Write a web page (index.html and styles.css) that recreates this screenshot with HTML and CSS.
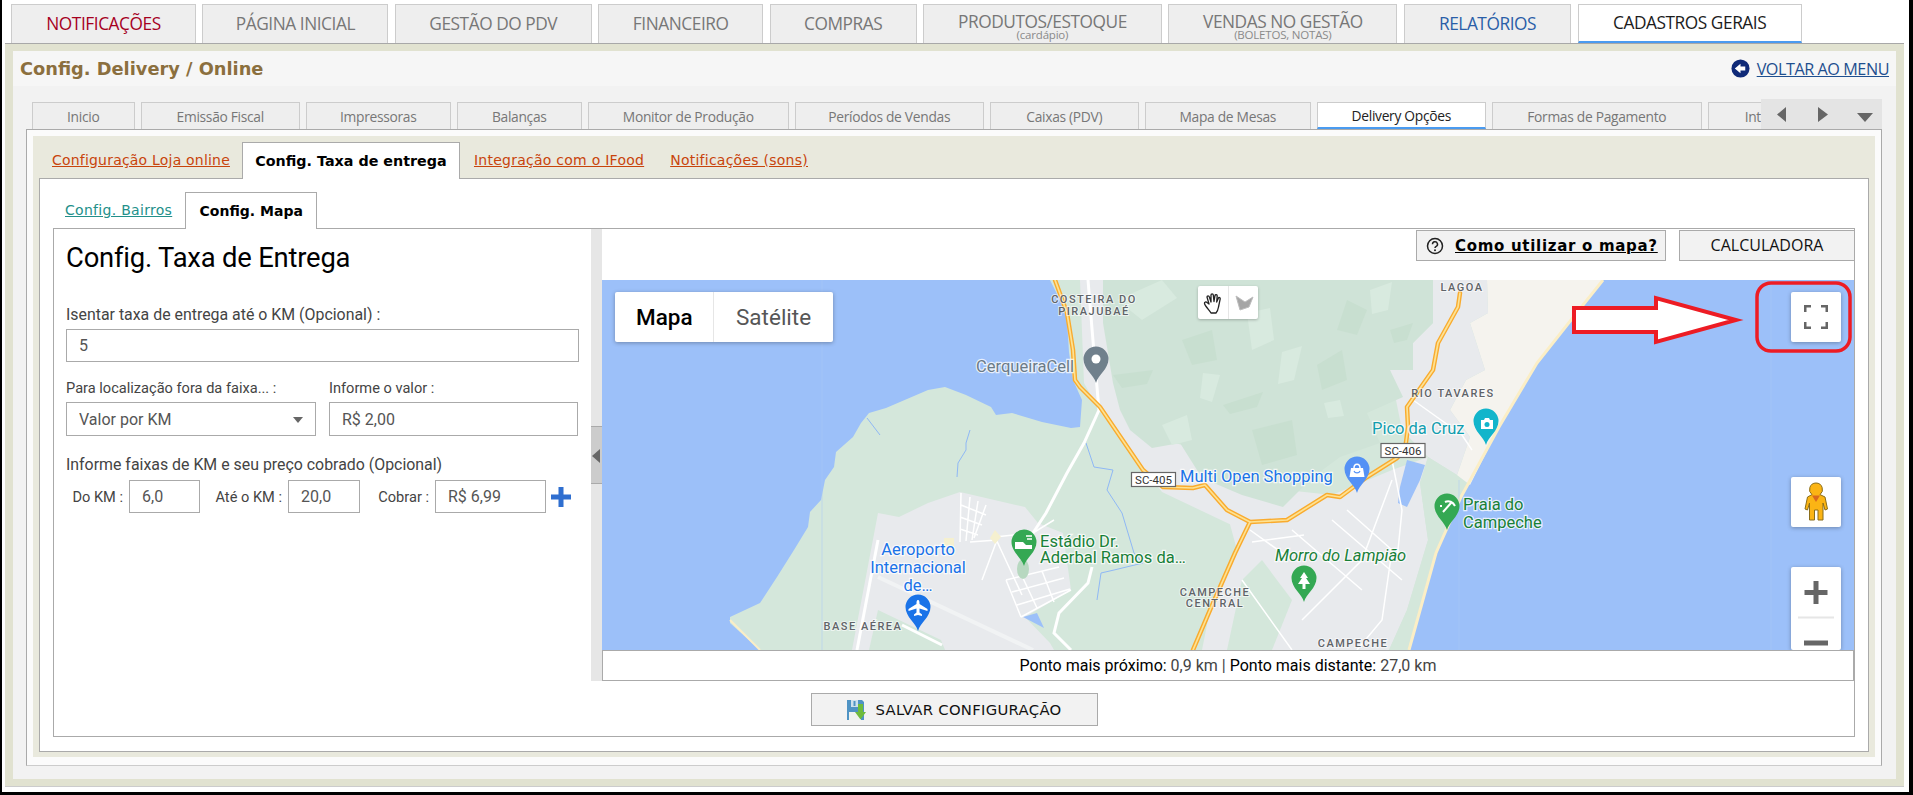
FILE: index.html
```html
<!DOCTYPE html>
<html lang="pt-BR">
<head>
<meta charset="utf-8">
<title>Config. Delivery / Online</title>
<link rel="stylesheet" href="styles.css">
</head>
<body>
<div class="page">
  <nav class="topnav">
    <a class="toptab notif">NOTIFICAÇÕES</a>
    <a class="toptab">PÁGINA INICIAL</a>
    <a class="toptab">GESTÃO DO PDV</a>
    <a class="toptab">FINANCEIRO</a>
    <a class="toptab">COMPRAS</a>
    <a class="toptab two">PRODUTOS/ESTOQUE<small>(cardápio)</small></a>
    <a class="toptab two">VENDAS NO GESTÃO<small>(BOLETOS, NOTAS)</small></a>
    <a class="toptab rel">RELATÓRIOS</a>
    <a class="toptab on">CADASTROS GERAIS</a>
  </nav>
  <main class="outer">
    <div class="inner">
      <header class="titlebar">
        <h1 class="title">Config. Delivery / Online</h1>
        <a class="back">
          <svg class="back-ico" viewBox="0 0 20 20"><circle cx="10" cy="10" r="9.5" fill="#0f2a78"/><path d="M4 10 10 5v3h5v4h-5v3z" fill="#fff"/></svg>
          <span>VOLTAR AO MENU</span>
        </a>
      </header>
      <div class="l2wrap">
        <nav class="l2tabs">
          <a class="l2tab">Inicio</a>
          <a class="l2tab">Emissão Fiscal</a>
          <a class="l2tab">Impressoras</a>
          <a class="l2tab">Balanças</a>
          <a class="l2tab">Monitor de Produção</a>
          <a class="l2tab">Períodos de Vendas</a>
          <a class="l2tab">Caixas (PDV)</a>
          <a class="l2tab">Mapa de Mesas</a>
          <a class="l2tab on">Delivery Opções</a>
          <a class="l2tab">Formas de Pagamento</a>
          <a class="l2tab">Integrações</a>
        </nav>
        <div class="scroller">
          <svg viewBox="0 0 121 30" width="121" height="30"><path d="M25 8v15L16 15.500zM57 8l10 7.500-10 7.500zM96 14h16l-8 9z" fill="#666"/></svg>
        </div>
      </div>
      <section class="box2">
        <div class="olive">
          <nav class="l3tabs">
            <a class="l3tab first">Configuração Loja online</a>
            <a class="l3tab on">Config. Taxa de entrega</a>
            <a class="l3tab">Integração com o IFood</a>
            <a class="l3tab">Notificações (sons)</a>
          </nav>
          <section class="box3">
            <nav class="l4tabs">
              <a class="l4tab">Config. Bairros</a>
              <a class="l4tab on">Config. Mapa</a>
            </nav>
            <section class="box4">
              <div class="split">
                <form class="form">
                  <h2 class="form-title">Config. Taxa de Entrega</h2>
                  <label class="lbl first">Isentar taxa de entrega até o KM (Opcional) :</label>
                  <input class="fld h33" value="5" readonly>
                  <div class="two-col">
                    <div>
                      <label class="lbl small">Para localização fora da faixa... :</label>
                      <div class="select-wrap"><select class="fld h34"><option>Valor por KM</option></select></div>
                    </div>
                    <div>
                      <label class="lbl small">Informe o valor :</label>
                      <input class="fld h34" value="R$ 2,00" readonly>
                    </div>
                  </div>
                  <label class="lbl third">Informe faixas de KM e seu preço cobrado (Opcional)</label>
                  <div class="range">
                    <span class="rl">Do KM :</span><input class="fld h33" value="6,0" readonly>
                    <span class="rl">Até o KM :</span><input class="fld h33" value="20,0" readonly>
                    <span class="rl">Cobrar :</span><input class="fld h33" value="R$ 6,99" readonly>
                    <svg class="plus" viewBox="0 0 22 22"><path d="M8.500 1h5v7.500H21v5h-7.500V21h-5v-7.500H1v-5h7.500z" fill="#2f6fd0"/></svg>
                  </div>
                </form>
                <div class="splitter"><span class="grip"></span></div>
                <div class="mapcol">
                  <div class="maptools">
                    <a class="help">
                      <svg class="help-ico" viewBox="0 0 18 18"><circle cx="9" cy="9" r="7.500" fill="none" stroke="#222" stroke-width="1.500"/><path d="M6.500 7.200A2.500 2.400 0 1 1 10.200 9.300C9.300 9.800 9 10.200 9 11" fill="none" stroke="#222" stroke-width="1.500"/><circle cx="9" cy="13.200" r="1" fill="#222"/></svg>
                      <span>Como utilizar o mapa?</span>
                    </a>
                    <a class="calc">CALCULADORA</a>
                  </div>
                  <div class="map">
                    <svg class="mapsvg" viewBox="0 0 1252 370" width="1252" height="370">
                      <defs>
                        <path id="pin" d="M0 36C-2 28-12.500 22-12.500 12A12.500 12.500 0 1 1 12.500 12C12.500 22 2 28 0 36Z"/>
                      </defs>
                      <rect width="1252" height="370" fill="#9cc0f9"/>
                      <path d="M448 0 458 20 465 40 467 72 471 100 480 120 478 147 469 148 440 142 410 133 394 135 389 127 364 115 343 107 326 110 284 128 267 133 259 143 251 157 234 172 232 187 223 200 219 220 208 232 206 247 192 270 175 297 158 323 128 337 128 343 158 370H807L834 273 859 217 897 147 935 83 969 40 1001 0Z" fill="#d4e7db"/>
                      <path d="M885 0H1001L969 40 935 83 897 147 868 205 855 195 868 157 848 130 864 100 883 90 868 43 886 33Z" fill="#f5f3ee"/>
                      <path d="M831 0H885L886 33 868 43 883 90 864 100 848 130 868 157 855 195 826 177 800 150 788 90 811 90 811 63 831 43Z" fill="#e8eaed"/>
                      <path d="M620 215 684 210 730 215 790 190 826 177 818 203 826 260 805 330 787 370H600L610 320 635 270Z" fill="#e8eaed"/>
                      <path d="M640 300 660 280 690 320 670 370H625Z" fill="#d4e7db"/>
                      <path d="M826 177 855 195 840 260 818 320 807 370H787L805 330 826 260 818 203Z" fill="#d4e7db"/>
                      <path d="M478 0H520L530 150 580 165 690 235 640 250 560 212 516 155 497 130 482 103Z" fill="#e8eaed"/>
                      <path d="M358 212 423 227 436 243 461 253 469 310 423 337 448 363 452 370H250L276 233 297 237 326 223Z" fill="#e8eaed"/>
                      <path d="M276 330 339 360 343 370H267Z" fill="#d4e7db"/>
                      <path d="M501 0H831V43L811 63 811 90 788 90 801 117 765 133 778 163 738 177 711 197 681 227 640 215 600 198 578 163 550 168 528 150 518 130 511 103 501 43Z" fill="#cfe3d7"/>
                      <g fill="#d8eadf">
                        <path d="M645 33 668 28 672 60 650 70Z"/>
                        <path d="M601 93 618 95 610 122 598 118Z"/>
                        <path d="M515 20 560 0 575 18 540 40Z"/>
                        <path d="M722 123 738 120 742 136 726 138Z"/>
                        <path d="M680 72 700 66 692 100 676 104Z"/>
                        <path d="M768 10 790 2 786 30 770 34Z"/>
                        <path d="M560 145 585 135 590 160 570 165Z"/>
                      </g>
                      <g fill="#c8dfd0">
                        <path d="M621 125 661 112 655 127 628 134Z"/>
                        <path d="M511 95 551 90 545 104 520 108Z"/>
                        <path d="M788 50 811 43 805 60 792 63Z"/>
                        <path d="M715 85 740 70 745 100 720 110Z"/>
                        <path d="M580 60 610 50 615 80 590 85Z"/>
                        <path d="M650 150 690 140 695 175 660 185Z"/>
                        <path d="M745 20 765 30 755 55 735 50Z"/>
                      </g>
                      <path d="M1001 0 969 40 935 83 897 147 859 217 834 273 807 370" fill="none" stroke="#fbeec6" stroke-width="3"/>
                      <path d="M128 340 158 370" fill="none" stroke="#fbeec6" stroke-width="2"/>
                      <g fill="none" stroke="#8fb8f5" stroke-width="1">
                        <path d="M265 138 278 155"/>
                        <path d="M368 150 364 163 364 170 356 183 355 197"/>
                        <path d="M484 163 492 187 511 190 505 210 520 233 532 273 541 283 512 290 499 293 495 320"/>
                      </g>
                      <path d="M421 337 435 333 442 348Z" fill="#9cc0f9"/>
                      <path d="M805 180 823 185 818 200 805 227 796 223 798 207Z" fill="#9cc0f9"/>
                      <g fill="none" stroke="#fff" stroke-width="1.500">
                        <path d="M359 213 358 262M368 217 364 261M376 221 370 260M384 225 372 258M359 225 384 235M358 237 380 245M358 249 376 255"/>
                        <path d="M404 300 457 287M410 312 462 298M415 325 468 309M419 337 469 310M420 296 435 328M440 291 452 322M404 300 419 337"/>
                        <path d="M276 260 255 370" stroke-width="3"/>
                        <path d="M393 257 431 253 452 240"/>
                        <path d="M393 257 420 315M368 262 395 260M380 300 395 260"/>
                        <path d="M648 250 690 280M690 250 760 310M730 240 800 300M790 200 760 280 700 340M745 230 790 270 780 340 755 370M702 255 650 262M640 300 690 370"/>
                        <path d="M811 120 860 155 870 170M790 180 800 230 795 280"/>
                      </g>
                      <path d="M276 297 431 370" fill="none" stroke="#f1f3f4" stroke-width="4"/>
                      <g fill="none" stroke="#fff" stroke-width="3">
                        <path d="M486 0 492 73 497 130 482 163 465 193 444 233 431 253"/>
                        <path d="M490 287 486 303 457 333 452 353 469 370"/>
                        <path d="M300 345 340 365"/>
                      </g>
                      <ellipse cx="421" cy="289" rx="6" ry="10" fill="#b7d8c0"/>
                      <rect x="342" y="258" width="10" height="8" fill="#f5f0cf"/>
                      <path d="M388 258 393 250 399 257 393 264Z" fill="#f5f0cf"/>
                      <g fill="none" stroke-linecap="round" stroke-linejoin="round">
                        <g stroke="#f9ab2e" stroke-width="4.500">
                          <path d="M453 0 465 33 471 70 473 100 478 107 498 127 541 190 561 207 591 208 603 205 625 230 648 242 685 240 725 215 738 217 765 197 795 178 803 170 806 147 805 127 831 90 836 63 856 27 858 13"/>
                          <path d="M648 242 633 273 608 330 591 370"/>
                        </g>
                        <g stroke="#fde293" stroke-width="1.700">
                          <path d="M453 0 465 33 471 70 473 100 478 107 498 127 541 190 561 207 591 208 603 205 625 230 648 242 685 240 725 215 738 217 765 197 795 178 803 170 806 147 805 127 831 90 836 63 856 27 858 13"/>
                          <path d="M648 242 633 273 608 330 591 370"/>
                        </g>
                      </g>
                      <path d="M220 0V370M1169 0V370M857 200V370" stroke="#a9c9fa" stroke-width="1" fill="none" opacity=".5"/>
                      <g class="shield">
                        <rect x="529.500" y="192.500" width="44" height="14"/>
                        <rect x="779" y="163.500" width="44" height="14"/>
                      </g>
                      <g class="shield-t">
                        <text x="551.500" y="204">SC-405</text>
                        <text x="801" y="175">SC-406</text>
                      </g>
                      <g class="area">
                        <text x="492" y="23">COSTEIRA DO</text>
                        <text x="492" y="35">PIRAJUBAÉ</text>
                        <text x="860" y="11">LAGOA</text>
                        <text x="851" y="117">RIO TAVARES</text>
                        <text x="613" y="316">CAMPECHE</text>
                        <text x="613" y="327">CENTRAL</text>
                        <text x="751" y="367">CAMPECHE</text>
                        <text x="261" y="350">BASE AÉREA</text>
                      </g>
                      <g class="poi">
                        <text class="gray" x="374" y="92">CerqueiraCell</text>
                        <text class="blue" x="578" y="202">Multi Open Shopping</text>
                        <text class="teal" x="770" y="154">Pico da Cruz</text>
                        <text class="green" x="861" y="230">Praia do</text>
                        <text class="green" x="861" y="248">Campeche</text>
                        <text class="green ital" x="673" y="281">Morro do Lampião</text>
                        <text class="green" x="438" y="267">Estádio Dr.</text>
                        <text class="green" x="438" y="283">Aderbal Ramos da…</text>
                        <text class="blue mid" x="316" y="275">Aeroporto</text>
                        <text class="blue mid" x="316" y="293">Internacional</text>
                        <text class="blue mid" x="316" y="311">de…</text>
                      </g>
                      <use href="#pin" x="494" y="67" fill="#70808c"/>
                      <circle cx="494" cy="79" r="4.500" fill="#fff"/>
                      <use href="#pin" x="755" y="177" fill="#5491f5"/>
                      <path d="M749 188h12l1.500 9h-15z" fill="#fff"/>
                      <path d="M752 188c0-5 6-5 6 0" fill="none" stroke="#fff" stroke-width="1.500"/>
                      <path d="M752 191c1 2.500 5 2.500 6 0" fill="none" stroke="#5491f5" stroke-width="1.200"/>
                      <use href="#pin" x="884" y="129" fill="#12b5cb"/>
                      <path d="M879 140h3l1-2h4l1 2h3v9h-12z" fill="#fff"/>
                      <circle cx="885" cy="144.500" r="2.500" fill="#12b5cb"/>
                      <use href="#pin" x="845" y="214" fill="#34a853"/>
                      <path d="M841 232 849 223M843 222C847 220 851 222 853 226M838 226h2" stroke="#fff" stroke-width="2" fill="none"/>
                      <use href="#pin" x="702" y="286" fill="#34a853"/>
                      <path d="M702 292 706 298H704L708 304H703.500V309H700.500V304H696L700 298H698Z" fill="#fff"/>
                      <use href="#pin" x="422" y="250" fill="#34a853"/>
                      <path d="M413 262h8l3 3h6v4h-17z" fill="#fff"/>
                      <path d="M424 256h6M425 259h5" stroke="#fff" stroke-width="1.500"/>
                      <use href="#pin" x="316" y="315" fill="#1a73e8"/>
                      <path d="M316 320c1.500 0 1.500 2 1.500 4l8 5v2l-8-2.500v4l2.500 2v1.500l-4-1-4 1V334.500l2.500-2v-4l-8 2.500v-2l8-5c0-2 0-4 1.500-4z" fill="#fff"/>
                      <path class="red-arrow" d="M972 28H1054V18L1134 40 1054 62V52H972Z"/>
                      <rect class="red-box" x="1155" y="3" width="93" height="68" rx="14"/>
                    </svg>
                    <div class="maptype">
                      <span class="mt on">Mapa</span><span class="mt">Satélite</span>
                    </div>
                    <div class="drawtools">
                      <span class="dt">
                        <svg viewBox="0 0 20 24" width="20" height="24"><path d="M6 13 4 6c0-1.500 2-1.500 2.400 0L8 11 8 4c0-1.500 2.200-1.500 2.300 0L11 10.500 12 4.500c.3-1.400 2.200-1.200 2.200.3L13.700 11l1.600-3.800c.5-1.300 2.200-.7 1.900.7L15.500 16C15 19 14 21 13 22H8C7 20 2 15 1.500 12.500 1.200 11 3 10.500 4 11.500z" fill="#fff" stroke="#222" stroke-width="1.300" stroke-linejoin="round"/></svg>
                      </span>
                      <span class="dt">
                        <svg viewBox="0 0 20 24" width="20" height="24"><path d="M2 5 11 11 19 6 15 16 6 19Z" fill="#a5a5a5" stroke="#bdbdbd"/></svg>
                      </span>
                    </div>
                    <div class="mapbtn full">
                      <svg viewBox="0 0 24 24" width="24" height="24"><path d="M1 7V1h6M17 1h6v6M1 17v6h6M23 17v6h-6" fill="none" stroke="#666" stroke-width="3"/></svg>
                    </div>
                    <div class="mapbtn peg">
                      <svg viewBox="0 0 24 40" width="24" height="40"><path d="M12 1a6.500 6.500 0 0 1 4 11.600L21 15l2.500 12-2.500 1-2-7V38h-5V28h-3.500V38H5.500V21l-2 7-2.500-1L3.500 15l4.500-2.400A6.500 6.500 0 0 1 12 1z" fill="#fbb414" stroke="#8a6d1a" stroke-width="1"/><path d="M8 13.500h8L12 20z" fill="#d9681d"/></svg>
                    </div>
                    <div class="mapbtn zoombox">
                      <svg viewBox="0 0 50 83" width="50" height="83"><path d="M22.500 14h5v9h9v5h-9v9h-5v-9h-9v-5h9z" fill="#666"/><path d="M7 50.500h36" stroke="#e6e6e6" stroke-width="2"/><path d="M13 76h24" stroke="#666" stroke-width="5"/></svg>
                    </div>
                  </div>
                  <div class="mapfoot">
                    <b>Ponto mais próximo:</b> 0,9 km | <b>Ponto mais distante:</b> 27,0 km
                  </div>
                </div>
              </div>
              <div class="saverow">
                <a class="save">
                  <svg class="save-ico" viewBox="0 0 20 20"><path d="M1 0h15l2 2v18H1z" fill="#4f93c4"/><rect x="5" y="0" width="7" height="7" fill="#cfe0ec"/><rect x="7.500" y="1" width="2" height="5" fill="#4f93c4"/><rect x="3" y="12" width="12" height="8" fill="#eef2ee"/><path d="M12 4h5v8h3l-5.500 7.500L9 12h3z" fill="#6ebb3c"/></svg>
                  <span>SALVAR CONFIGURAÇÃO</span>
                </a>
              </div>
            </section>
          </section>
        </div>
      </section>
    </div>
  </main>
</div>
</body>
</html>
```

FILE: styles.css
```css
* { box-sizing: border-box; }
html, body { margin: 0; padding: 0; background: #fff; }
body { height: 795px; overflow: hidden; }
a { display: block; }
h1, h2 { margin: 0; }

.page {
  height: 795px;
  background: #fff;
  border-left: 2px solid #000;
  border-right: 4px solid #000;
  border-bottom: 3px solid #000;
  padding: 4px 5px 5px 3px;
  display: flex;
  flex-direction: column;
}

/* top navigation */
.topnav {
  display: grid;
  grid-template-columns: 185px 186px 197px 165px 147px 239px 229px 167.5px 224px;
  column-gap: 6.4px;
  padding-left: 6px;
  height: 39px;
  flex: none;
}
.toptab {
  display: flex;
  flex-direction: column;
  align-items: center;
  justify-content: center;
  background: #eee;
  border: 1px solid #ccc;
  border-bottom: 0;
  font: 17.3px/18px "Open Sans", sans-serif;
  letter-spacing: -.45px;
  color: #777;
}
.toptab small { display: block; font-size: 11.5px; line-height: 10px; color: #8a8a8a; letter-spacing: -.2px; }
.toptab.two { padding-top: 5px; line-height: 16px; }
.toptab.notif { color: #a6001f; }
.toptab.rel { color: #2a5ea8; }
.toptab.on { background: #fff; color: #1c1c1c; border-bottom: 2px solid #4a9bf0; }

.outer {
  flex: 1;
  min-height: 0;
  background: #e1e2d0;
  border-top: 1px solid #a8a8a8;
  border-bottom: 1px solid #ccc;
  padding: 7px 8px;
  display: flex;
}
.inner {
  flex: 1;
  background: #f2f2f2;
  padding-bottom: 13px;
  display: flex;
  flex-direction: column;
  min-width: 0;
}
.titlebar {
  height: 35px;
  flex: none;
  background: #f6f6f6;
  display: flex;
  align-items: center;
  justify-content: space-between;
  padding: 0 7px;
}
.title { font: bold 17.8px "DejaVu Sans", sans-serif; color: #8b6f3e; }
.back { display: flex; align-items: center; gap: 7px; font: 16.2px "Open Sans", sans-serif; letter-spacing: -.45px; color: #1e4f8f; text-decoration: underline; }
.back-ico { width: 19px; height: 19px; }

/* second level tabs */
.l2wrap { position: relative; margin: 13px 0 0 13px; height: 30px; width: 1856px; overflow: hidden; flex: none; }
.l2tabs { display: grid; grid-template-columns: 102.5px 158.5px 144.5px 124.5px 200.5px 188.5px 148.5px 165.5px 168.5px 209.5px 145px; column-gap: 6.5px; padding-left: 6px; margin-top: 3px; height: 27px; width: 1900px; }
.l2tab {
  display: flex; align-items: center; justify-content: center;
  background: #eee;
  border: 1px solid #ccc;
  border-bottom: 0;
  font: 13.8px "Open Sans", sans-serif;
  letter-spacing: -.3px;
  color: #777;
  white-space: nowrap;
}
.l2tab.on { background: #fff; color: #222; border-bottom: 2px solid #4a9bf0; }
.scroller { position: absolute; right: 0; top: 0; width: 121px; height: 30px; background: #e4e4e4; overflow: hidden; }
.scroller svg { display: block; }
.box2 {
  margin: 0 0 0 13px;
  width: 1856px;
  flex: 1;
  min-height: 0;
  border: 1px solid #aaa;
  border-bottom-color: #ccc;
  background: #fbfbfb;
  padding: 6px 6px 8px;
  display: flex;
}
.olive { flex: 1; min-width: 0; background: #e9e9dd; padding: 6px 6px 5px; display: flex; flex-direction: column; }

/* third level tabs */
.l3tabs { display: flex; height: 37px; padding-left: 13px; flex: none; position: relative; z-index: 1; margin-bottom: -1px; }
.l3tab {
  font: 14px/37px "DejaVu Sans", sans-serif;
  letter-spacing: .25px;
  color: #c8440c;
  text-decoration: underline;
  margin-right: 26px;
  white-space: nowrap;
}
.l3tab.first { margin-right: 12px; letter-spacing: .2px; }
.l3tab.on {
  background: #fff; color: #000; font-weight: bold; text-decoration: none;
  border: 1px solid #aaa; border-bottom: 0;
  width: 218px; text-align: center; letter-spacing: 0;
  font-size: 14.3px;
  margin-right: 14px;
}
.box3 { flex: 1; min-height: 0; background: #fff; border: 1px solid #aaa; padding: 13px 13px 14px; display: flex; flex-direction: column; }
.l4tabs { display: flex; height: 37px; padding-left: 12px; flex: none; position: relative; z-index: 1; margin-bottom: -1px; }
.l4tab { font: 14px/37px "DejaVu Sans", sans-serif; color: #23908a; text-decoration: underline; margin-right: 13px; white-space: nowrap; letter-spacing: .3px; }
.l4tab.on { background: #fff; color: #000; font-weight: bold; text-decoration: none; border: 1px solid #aaa; border-bottom: 0; width: 132px; text-align: center; letter-spacing: 0; }
.box4 { flex: 1; min-height: 0; border: 1px solid #aaa; background: #fff; display: flex; flex-direction: column; }
.split { display: grid; grid-template-columns: 537px 11px 1fr; height: 452px; flex: none; }

/* form */
.form { padding: 11px 12px 0; font: 14.6px/18px Roboto, sans-serif; color: #444; }
.form-title { font: 400 27.4px/36px Roboto, sans-serif; color: #000; letter-spacing: -.2px; }
.lbl { display: block; line-height: 18px; font-size: 15.9px; }
.lbl.small { font-size: 14.6px; }
.lbl.first { margin-top: 30px; }
.fld {
  display: block; width: 100%;
  border: 1px solid #aaa; background: #fff;
  font: 16px Roboto, sans-serif; color: #555;
  padding: 0 12px; margin-top: 5px; border-radius: 0; outline: 0; appearance: none;
}
.h33 { height: 33px; }
.h34 { height: 34px; }
.two-col { display: grid; grid-template-columns: 250px 249px; column-gap: 13px; margin-top: 17px; }
.select-wrap { position: relative; }
.select-wrap::after { content: ""; position: absolute; right: 13px; top: 15px; border: 5px solid transparent; border-top: 6px solid #666; border-bottom: 0; }
.lbl.third { margin-top: 20px; }
.range { display: grid; grid-template-columns: 63px 71px 88px 72px 75px 111px 26px; margin-top: 6px; align-items: center; }
.range .fld { margin-top: 0; }
.rl { text-align: right; padding-right: 6px; white-space: nowrap; }
.plus { width: 22px; height: 22px; margin-left: 4px; }

.splitter { background: #e6e6e6; position: relative; }
.grip { position: absolute; left: 0; right: 0; top: 197px; height: 58px; background: #ccc; border-top: 1px solid #aaa; border-bottom: 1px solid #aaa; }
.grip::after { content: ""; position: absolute; left: 1px; top: 22px; border: 7px solid transparent; border-right: 8px solid #666; border-left: 0; }

.mapcol { display: flex; flex-direction: column; min-width: 0; }
.maptools { height: 51px; flex: none; display: flex; justify-content: flex-end; align-items: flex-start; gap: 13px; padding-top: 1px; }
.help { display: flex; align-items: center; gap: 11px; width: 250px; height: 31px; padding-left: 9px; background: #f2f2f2; border: 1px solid #aaa; font: bold 15px "DejaVu Sans", sans-serif; color: #000; text-decoration: underline; letter-spacing: .7px; white-space: nowrap; }
.help-ico { width: 18px; height: 18px; flex: none; }
.calc { width: 175px; height: 31px; background: #f2f2f2; border: 1px solid #aaa; border-right: 0; font: 16px/29px "Open Sans", sans-serif; text-align: center; color: #111; }

/* map */
.map { position: relative; height: 370px; flex: none; overflow: hidden; background: #9cc0f9; }
.mapsvg { display: block; }
.maptype { position: absolute; left: 13px; top: 12px; width: 218px; height: 50px; display: flex; background: #fff; border-radius: 2px; box-shadow: 0 1px 4px rgba(0,0,0,.3); font: 22.5px/50px Roboto, sans-serif; }
.mt { padding-left: 22px; color: #565656; }
.mt.on { color: #000; font-weight: 500; border-right: 1px solid #e6e6e6; width: 99px; padding-left: 21px; }
.drawtools { position: absolute; left: 596px; top: 6px; height: 33px; display: flex; background: #fff; border-radius: 2px; box-shadow: 0 1px 3px rgba(0,0,0,.25); }
.dt { width: 30px; display: flex; align-items: center; justify-content: center; }
.dt + .dt { border-left: 1px solid #e6e6e6; }
.mapbtn { position: absolute; left: 1189px; width: 50px; display: flex; align-items: center; justify-content: center; background: #fff; border-radius: 2px; box-shadow: 0 1px 4px rgba(0,0,0,.3); }
.full { top: 12px; height: 50px; }
.peg { top: 197px; height: 50px; }
.zoombox { top: 287px; height: 83px; }
.red-arrow { fill: #fff; stroke: #ed1c24; stroke-width: 4; }
.red-box { fill: none; stroke: #ed1c24; stroke-width: 3.500; }
.shield rect { fill: #fff; stroke: #666; stroke-width: 1.200; }
.shield-t text { font: 11.500px Roboto, sans-serif; fill: #333; text-anchor: middle; }
.area text { font: 500 11px Roboto, sans-serif; letter-spacing: 1.5px; fill: #5f6368; text-anchor: middle; paint-order: stroke; stroke: #fff; stroke-width: 2px; stroke-opacity: .6; }
.poi text { font: 16.500px Roboto, sans-serif; paint-order: stroke; stroke: #fff; stroke-width: 2.500px; stroke-opacity: .75; }
.poi .gray { fill: #6b7b88; }
.poi .blue { fill: #1a73e8; }
.poi .teal { fill: #129eaf; }
.poi .green { fill: #188038; }
.poi .ital { font-style: italic; }
.poi .mid { text-anchor: middle; }
.mapfoot { height: 31px; flex: none; background: #fff; border: 1px solid #aaa; text-align: center; font: 16px/29px Roboto, sans-serif; color: #444; white-space: nowrap; }
.mapfoot b { font-weight: 400; color: #000; }

.saverow { display: flex; justify-content: center; padding-top: 12px; }
.save { display: flex; align-items: center; width: 287px; height: 33px; padding-left: 34px; gap: 10px; background: #f2f2f2; border: 1px solid #aaa; font: 14.8px "DejaVu Sans", sans-serif; letter-spacing: .3px; color: #111; white-space: nowrap; }
.save-ico { width: 20px; height: 20px; flex: none; }
```
